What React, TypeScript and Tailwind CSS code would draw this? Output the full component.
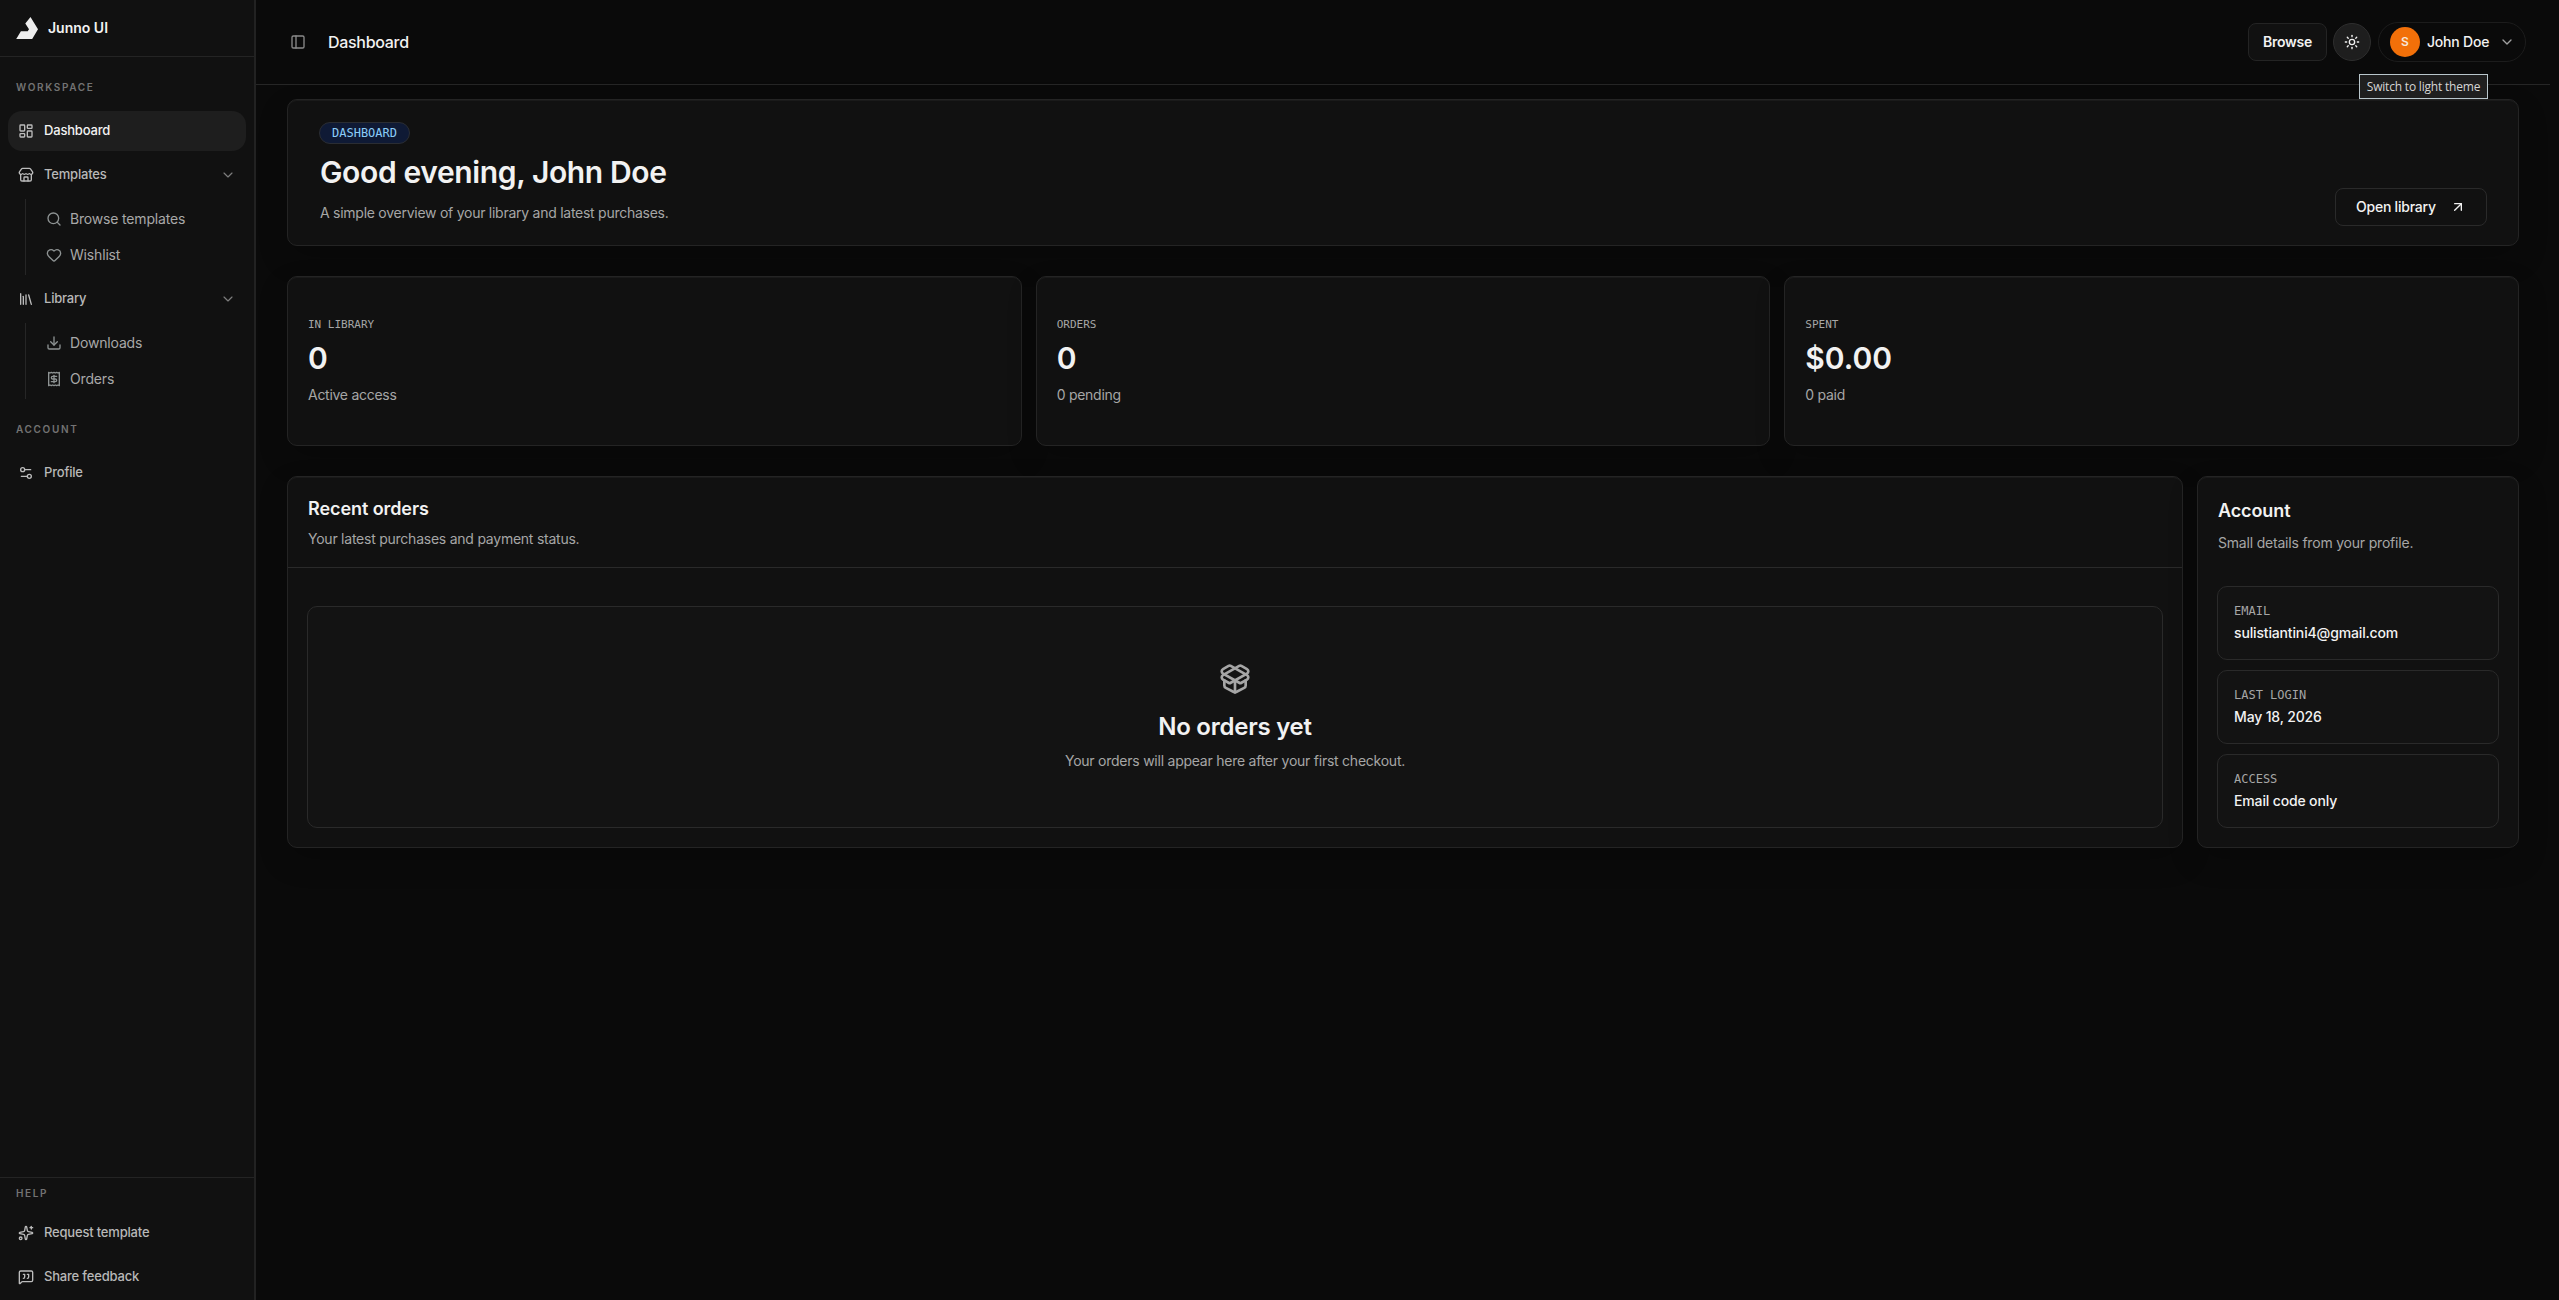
import type { ReactNode } from 'react'
import {
  ArrowUpRight,
  ChevronDown,
  Download,
  Heart,
  LayoutDashboard,
  Library,
  MessageSquareQuote,
  PackageOpen,
  PanelLeft,
  Receipt,
  Search,
  Settings2,
  Sparkles,
  Store,
  Sun,
  type LucideIcon,
} from 'lucide-react'
import clsx from 'clsx'

interface NavItemProps {
  icon: LucideIcon
  label: string
  active?: boolean
  expandable?: boolean
}

const stats = [
  { label: 'In library', value: '0', note: 'Active access' },
  { label: 'Orders', value: '0', note: '0 pending' },
  { label: 'Spent', value: '$0.00', note: '0 paid' },
]

const details = [
  { label: 'Email', value: 'sulistiantini4@gmail.com' },
  { label: 'Last login', value: 'May 18, 2026' },
  { label: 'Access', value: 'Email code only' },
]

function Logo() {
  return (
    <svg width="24" height="24" viewBox="0 0 24 24" fill="#ededed">
      <path d="M15.5 1 23 13.3 17.2 23H1.2l4.7-7.8h6.8l1.3-2-3.7-5.6z" />
    </svg>
  )
}

function NavLabel({ children }: { children: ReactNode }) {
  return (
    <div className="px-4 text-[10px] leading-4 font-semibold tracking-[1.65px] text-[#737373] uppercase">
      {children}
    </div>
  )
}

function NavItem({ icon: Icon, label, active, expandable }: NavItemProps) {
  return (
    <div
      className={clsx(
        'mx-2 flex h-10 items-center rounded-[14px] px-[10px] text-[13px] font-medium tracking-[-0.19px]',
        active ? 'bg-[#1e1e1e] text-[#f2f2f2]' : 'text-[#b8b8b8]',
      )}
    >
      <Icon size={16} className="text-[#bcbcbc]" />
      <span className="ml-[10px]">{label}</span>
      {expandable && <ChevronDown size={16} strokeWidth={1.75} className="ml-auto text-[#7d7d7d]" />}
    </div>
  )
}

function SubNav({ items }: { items: { icon: LucideIcon; label: string }[] }) {
  return (
    <div className="my-1 ml-[25px] flex flex-col gap-1 border-l border-[#262626] py-1">
      {items.map(({ icon: Icon, label }) => (
        <div key={label} className="flex h-8 items-center pl-5 text-sm tracking-[-0.17px] text-[#a8a8a8]">
          <Icon size={16} className="text-[#8e9393]" />
          <span className="ml-2">{label}</span>
        </div>
      ))}
    </div>
  )
}

function Card({ className, children }: { className?: string; children: ReactNode }) {
  return (
    <section
      className={clsx(
        'rounded-[10px] border border-[#242424] bg-[#111111] shadow-[inset_0_1px_0_rgba(255,255,255,0.04),0_12px_30px_rgba(0,0,0,0.2)]',
        className,
      )}
    >
      {children}
    </section>
  )
}

function Sidebar() {
  return (
    <aside className="flex w-64 shrink-0 flex-col border-r-2 border-[#222222] bg-[#111111]">
      <div className="flex h-[57px] items-center border-b border-[#242424] pl-[15px]">
        <Logo />
        <span className="ml-[9px] text-sm font-semibold text-[#f2f2f2]">Junno UI</span>
      </div>
      <nav className="flex flex-col pt-[22px]">
        <NavLabel>Workspace</NavLabel>
        <div className="mt-4 flex flex-col">
          <NavItem icon={LayoutDashboard} label="Dashboard" active />
          <div className="h-1" />
          <NavItem icon={Store} label="Templates" expandable />
          <SubNav
            items={[
              { icon: Search, label: 'Browse templates' },
              { icon: Heart, label: 'Wishlist' },
            ]}
          />
          <NavItem icon={Library} label="Library" expandable />
          <SubNav
            items={[
              { icon: Download, label: 'Downloads' },
              { icon: Receipt, label: 'Orders' },
            ]}
          />
        </div>
        <div className="mt-[18px]">
          <NavLabel>Account</NavLabel>
        </div>
        <div className="mt-4">
          <NavItem icon={Settings2} label="Profile" />
        </div>
      </nav>
      <div className="mt-auto border-t border-[#242424] pt-[7px] pb-[3px]">
        <NavLabel>Help</NavLabel>
        <div className="mt-3 flex flex-col gap-1">
          <NavItem icon={Sparkles} label="Request template" />
          <NavItem icon={MessageSquareQuote} label="Share feedback" />
        </div>
      </div>
    </aside>
  )
}

function Header() {
  return (
    <header className="flex h-[85px] items-center border-b border-[#262626] pr-6 pl-[34px]">
      <PanelLeft size={16} className="text-[#8a8a8a]" />
      <h1 className="mb-px ml-[22px] text-base font-medium tracking-[-0.3px] text-[#f2f2f2]">Dashboard</h1>
      <div className="ml-auto flex items-center">
        <button className="flex h-[38px] w-[79px] items-center justify-center rounded-lg border border-[#242424] bg-[#111111] text-sm font-semibold tracking-[-0.25px] text-[#f2f2f2]">
          Browse
        </button>
        <div className="relative ml-[6px]">
          <button className="flex size-[38px] items-center justify-center rounded-full border border-[#2e2e2e] bg-[#1e1e1e] text-[#f2f2f2]">
            <Sun size={16} />
          </button>
          <div className="absolute top-[51px] left-[26px] z-10 flex h-[25px] w-[129px] items-center justify-center border border-[#b9c6cc] bg-[#1f1f1f] font-['Open_Sans',sans-serif] text-xs tracking-[-0.2px] whitespace-nowrap text-[#d6d6d6]">
            Switch to light theme
          </div>
        </div>
        <button className="ml-[7px] flex h-10 w-[148px] items-center rounded-full border border-[#1c1c1c] pl-[11px]">
          <span className="flex size-[30px] items-center justify-center rounded-full bg-[#f27009] text-xs font-semibold text-[#f5e6da]">
            S
          </span>
          <span className="ml-[7px] text-sm font-medium tracking-[-0.2px] text-[#f2f2f2]">John Doe</span>
          <ChevronDown size={16} className="ml-[10px] text-[#a0a0a0]" />
        </button>
      </div>
    </header>
  )
}

function Hero() {
  return (
    <Card className="flex h-[147px] items-end justify-between px-[31px] pb-[19px]">
      <div className="flex h-full flex-col items-start pt-[22px]">
        <span className="flex h-[22px] w-[91px] items-center justify-center rounded-full border border-[#2a2d33] bg-[#0f1a35] font-['DejaVu_Sans_Mono',monospace] text-xs text-[#8accf8]">
          DASHBOARD
        </span>
        <h2 className="mt-[10px] ml-[1px] text-3xl leading-9 font-semibold tracking-[-0.37px] text-[#f2f2f2]">
          Good evening, John Doe
        </h2>
        <p className="mt-[13px] ml-[1px] text-sm tracking-[-0.26px] text-[#a6a6a6]">
          A simple overview of your library and latest purchases.
        </p>
      </div>
      <button className="flex h-[38px] w-[152px] items-center rounded-lg border border-[#2a2a2a] pl-[20px] text-sm font-medium tracking-[-0.23px] text-[#f2f2f2]">
        Open library
        <ArrowUpRight size={16} className="ml-[14px]" />
      </button>
    </Card>
  )
}

export default function App() {
  return (
    <div className="flex h-[1300px] bg-[#0a0a0a] font-['Inter',sans-serif]">
      <Sidebar />
      <main className="mr-[9px] flex min-w-0 flex-1 flex-col">
        <Header />
        <div className="flex flex-col gap-[30px] px-[31px] pt-[14px]">
          <Hero />

          <div className="grid grid-cols-3 gap-[14px]">
            {stats.map((stat) => (
              <Card key={stat.label} className="h-[170px] px-5 pt-10">
                <div className="font-['DejaVu_Sans_Mono',monospace] text-[11px] leading-4 text-[#a6a6a6] uppercase">
                  {stat.label}
                </div>
                <div className="mt-[7px] text-3xl leading-9 font-semibold text-[#f2f2f2]">{stat.value}</div>
                <div className="mt-[9px] text-sm tracking-[-0.27px] text-[#a6a6a6]">{stat.note}</div>
              </Card>
            ))}
          </div>

          <div className="flex h-[372px] gap-[14px]">
            <Card className="flex flex-1 flex-col">
              <div className="flex h-[91px] flex-col border-b border-[#2a2a2a] px-5 pt-[18px]">
                <h3 className="text-lg leading-7 font-semibold tracking-[-0.08px] text-[#f2f2f2]">Recent orders</h3>
                <p className="mt-[6px] text-sm tracking-[-0.24px] text-[#a6a6a6]">
                  Your latest purchases and payment status.
                </p>
              </div>
              <div className="mx-[19px] mt-[38px] mb-[19px] flex flex-1 flex-col items-center rounded-[10px] border border-[#2a2a2a] bg-[#131313] pt-[56px]">
                <PackageOpen size={32} className="text-[#a6a6a6]" />
                <h3 className="mt-4 text-2xl font-semibold tracking-[-0.25px] text-[#f2f2f2]">No orders yet</h3>
                <p className="mt-2 text-sm tracking-[-0.24px] text-[#a6a6a6]">
                  Your orders will appear here after your first checkout.
                </p>
              </div>
            </Card>

            <Card className="flex w-[322px] flex-col px-[19px] pt-[20px]">
              <h3 className="ml-[1px] text-lg leading-7 font-semibold tracking-[-0.1px] text-[#f2f2f2]">Account</h3>
              <p className="mt-2 ml-[1px] text-sm tracking-[-0.2px] text-[#a6a6a6]">
                Small details from your profile.
              </p>
              <div className="mt-[33px] flex flex-col gap-[10px]">
                {details.map((item) => (
                  <div
                    key={item.label}
                    className="h-[74px] rounded-[10px] border border-[#2a2a2a] bg-[#131313] px-4 pt-4"
                  >
                    <div className="font-['DejaVu_Sans_Mono',monospace] text-xs text-[#a6a6a6] uppercase">
                      {item.label}
                    </div>
                    <div className="mt-1 text-sm font-medium tracking-[-0.15px] text-[#f2f2f2]">{item.value}</div>
                  </div>
                ))}
              </div>
            </Card>
          </div>
        </div>
      </main>
    </div>
  )
}
